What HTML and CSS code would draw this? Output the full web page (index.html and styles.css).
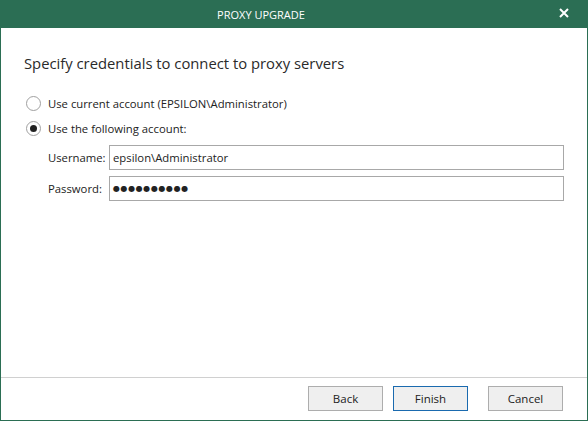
FILE: index.html
```html
<!DOCTYPE html>
<html>
<head>
<meta charset="utf-8">
<link rel="stylesheet" href="styles.css">
</head>
<body>
<div class="window">
  <div class="titlebar">
    <span class="title">PROXY UPGRADE</span>
    <span class="close">
      <svg width="10" height="10" viewBox="0 0 10 10"><path d="M1 1 L9 9 M9 1 L1 9" stroke="#fff" stroke-width="2" fill="none"/></svg>
    </span>
  </div>
  <div class="content">
    <h1 class="heading">Specify credentials to connect to proxy servers</h1>
    <div class="options">
      <label class="radio-row"><span class="radio"></span><span>Use current account (EPSILON\Administrator)</span></label>
      <label class="radio-row"><span class="radio checked"></span><span>Use the following account:</span></label>
      <div class="fields">
        <div class="field-row"><span class="field-label">Username:</span><div class="input">epsilon\Administrator</div></div>
        <div class="field-row"><span class="field-label">Password:</span><div class="input password">●●●●●●●●●●</div></div>
      </div>
    </div>
  </div>
  <div class="footer">
    <button class="btn">Back</button>
    <button class="btn primary">Finish</button>
    <button class="btn cancel">Cancel</button>
  </div>
</div>
</body>
</html>
```
FILE: styles.css
```css
* { box-sizing: border-box; }
html, body { margin: 0; padding: 0; }
body {
  width: 588px;
  height: 421px;
  font-family: "Open Sans", "Noto Sans", sans-serif;
  color: #222;
  background: #fff;
}
.window {
  width: 588px;
  height: 421px;
  display: flex;
  flex-direction: column;
  border: 1px solid #2b6e54;
  border-top: none;
}
.titlebar {
  height: 28px;
  background: #2b6e54;
  margin: 0 -1px;
  padding-right: 66px;
  position: relative;
  display: flex;
  align-items: center;
  justify-content: center;
}
.title {
  color: #fff;
  font-size: 11px;
}
.close {
  position: absolute;
  right: 19px;
  top: 8px;
  width: 10px;
  height: 10px;
  display: flex;
}
.content {
  flex: 1;
  padding: 0 23px 0 23px;
  border-bottom: 1px solid #d0d0d0;
}
.heading {
  margin: 25px 0 0 0;
  font-size: 14.8px;
  font-weight: normal;
  color: #2a2a2a;
  line-height: 20px;
}
.options {
  margin-top: 18px;
  display: flex;
  flex-direction: column;
}
.radio-row {
  display: flex;
  align-items: center;
  height: 25px;
  font-size: 11.3px;
  gap: 7px;
  color: #222;
}
.radio {
  width: 15px;
  height: 15px;
  border: 1px solid #a0a0a0;
  border-radius: 50%;
  margin-left: 2px;
  display: flex;
  align-items: center;
  justify-content: center;
  background: #fff;
}
.radio.checked::after {
  content: "";
  width: 7px;
  height: 7px;
  border-radius: 50%;
  background: #222;
}
.fields {
  margin-left: 24px;
  margin-top: 4px;
  display: flex;
  flex-direction: column;
  gap: 6px;
}
.field-row {
  display: flex;
  align-items: center;
  font-size: 11.3px;
}
.field-label {
  width: 61px;
}
.input {
  flex: 1;
  height: 25px;
  border: 1px solid #a8a8a8;
  padding: 0 3px;
  display: flex;
  align-items: center;
  font-size: 11.3px;
}
.input.password {
  font-size: 8px;
  letter-spacing: 0.6px;
  font-family: "DejaVu Sans", sans-serif;
}
.footer {
  height: 42px;
  display: flex;
  align-items: flex-start;
  padding: 8px 24px 0 0;
  justify-content: flex-end;
}
.btn {
  width: 75px;
  height: 25px;
  background: #efefef;
  border: 1px solid #adadad;
  font-family: inherit;
  font-size: 11.5px;
  color: #222;
  padding: 0;
  margin-left: 10px;
}
.btn.primary { border-color: #1a6aaf; }
.btn.cancel { margin-left: 20px; }
```
